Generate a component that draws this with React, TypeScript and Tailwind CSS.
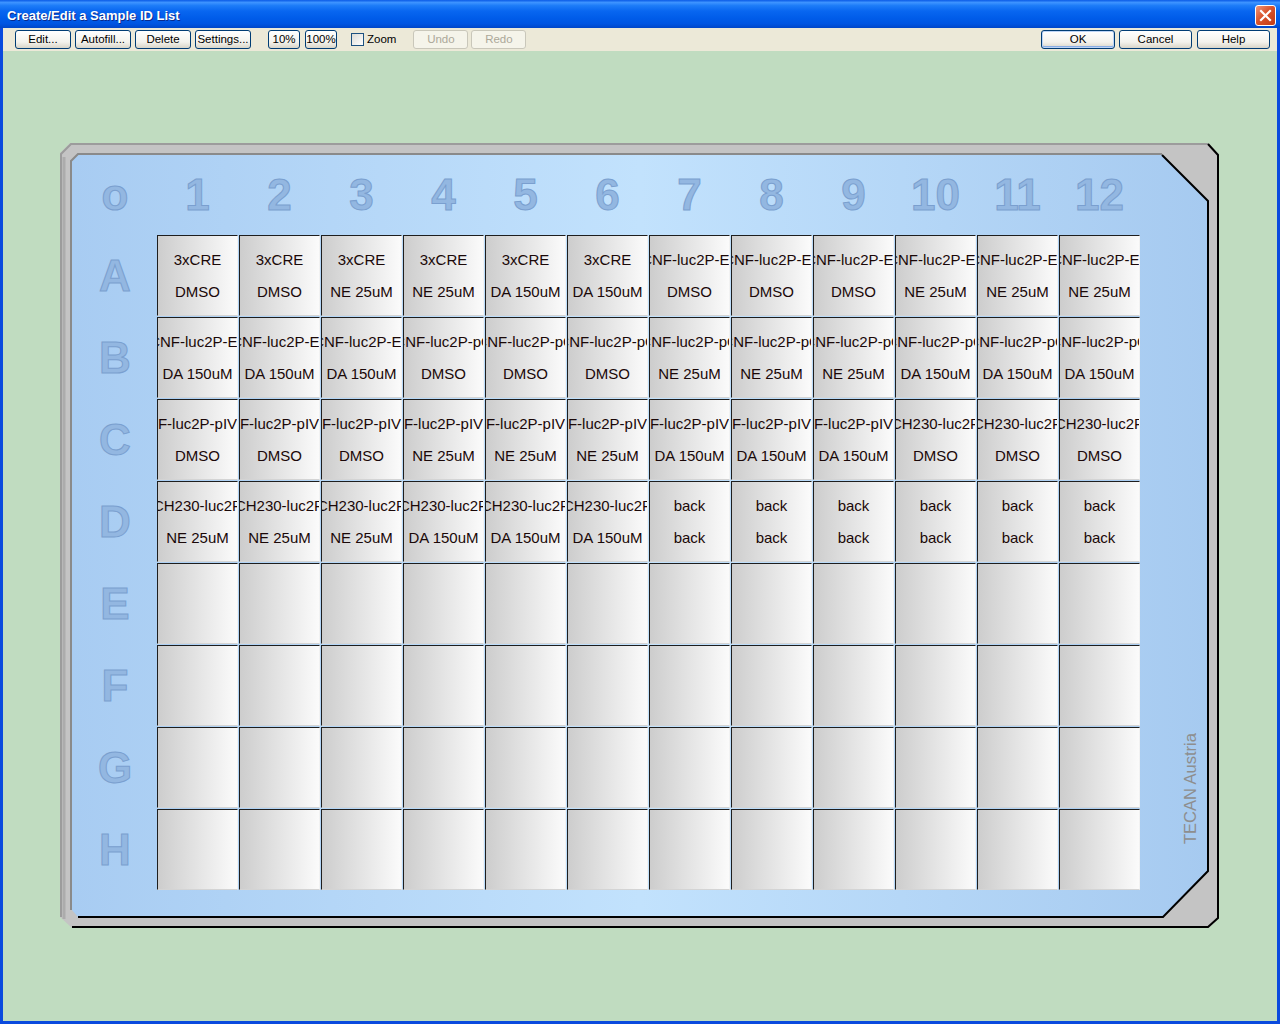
import React from 'react';

const font = "font-['Liberation_Sans',Arial,sans-serif]";

type Cell = [string, string] | null;

const E1 = 'CNF-luc2P-E1';
const PG = 'CNF-luc2P-pG';
const IV = 'NF-luc2P-pIVC';
const CH = 'CH230-luc2P';

const rep = (n: number, a: string, b: string): Cell[] => Array.from({ length: n }, () => [a, b] as Cell);
const empty = (): Cell[] => Array.from({ length: 12 }, () => null);

const plate: Cell[][] = [
  [...rep(2, '3xCRE', 'DMSO'), ...rep(2, '3xCRE', 'NE 25uM'), ...rep(2, '3xCRE', 'DA 150uM'), ...rep(3, E1, 'DMSO'), ...rep(3, E1, 'NE 25uM')],
  [...rep(3, E1, 'DA 150uM'), ...rep(3, PG, 'DMSO'), ...rep(3, PG, 'NE 25uM'), ...rep(3, PG, 'DA 150uM')],
  [...rep(3, IV, 'DMSO'), ...rep(3, IV, 'NE 25uM'), ...rep(3, IV, 'DA 150uM'), ...rep(3, CH, 'DMSO')],
  [...rep(3, CH, 'NE 25uM'), ...rep(3, CH, 'DA 150uM'), ...rep(6, 'back', 'back')],
  empty(),
  empty(),
  empty(),
  empty(),
];

const rowNames = ['A', 'B', 'C', 'D', 'E', 'F', 'G', 'H'];

function Btn({ label, w, disabled, primary }: { label: string; w: string; disabled?: boolean; primary?: boolean }) {
  return (
    <button
      className={[
        'h-[19px] rounded-[3px] border text-[11.5px] leading-none flex items-center justify-center shrink-0',
        font,
        w,
        disabled
          ? 'border-[#c9c7ba] text-[#aca899] bg-[#f5f4ea]'
          : 'border-[#003c74] text-black bg-[linear-gradient(to_bottom,#ffffff,#f3f2ec_65%,#d9d5c9)]',
        primary ? 'shadow-[inset_0_0_0_1px_#bcd4f6,inset_0_-1px_0_1px_#89ade4]' : '',
      ].join(' ')}
    >
      {label}
    </button>
  );
}

function PlateFrame() {
  return (
    <svg className="absolute inset-0" width="1160" height="786" viewBox="0 0 1160 786">
      <defs>
        <linearGradient id="blue" x1="0" x2="1" y1="0" y2="0">
          <stop offset="0" stopColor="#a8ccf2" />
          <stop offset="0.5" stopColor="#c2e2fd" />
          <stop offset="1" stopColor="#a6caf0" />
        </linearGradient>
      </defs>
      <polygon points="10,0 1148,0 1159,11 1159,775 1149,785 12,785 0,774 0,10" fill="#c4c4c4" />
      <polyline points="1,774 1,11 11,1 1148,1" fill="none" stroke="#9c9c9c" strokeWidth="2" />
      <polyline points="4,776 4,14" fill="none" stroke="#acacac" strokeWidth="3" />
      <polyline points="1148,1 1158,12 1158,775 1148,784 12,784" fill="none" stroke="#000" strokeWidth="2" />
      <polygon points="18,12 1102,12 1148,58 1148,728 1103,774 18,774 12,767 12,18" fill="url(#blue)" />
      <polyline points="11,767 11,18 18,11 1102,11" fill="none" stroke="#8a8a8a" strokeWidth="2" />
      <polyline points="1102,12 1148,58 1148,728 1103,774 18,774" fill="none" stroke="#000" strokeWidth="2" />
    </svg>
  );
}

const labelCls =
  "text-[44px] font-bold leading-none text-[#93b7e1] [-webkit-text-stroke:1px_#7a9fcf] font-['Liberation_Sans',Arial,sans-serif]";

function Well({ cell }: { cell: Cell }) {
  return (
    <div className="w-[81px] h-[81px] shrink-0 overflow-hidden border border-t-[#1e1e1e] border-l-[#1e1e1e] border-r-[#f2f2f2] border-b-[#d4d4d4] bg-[linear-gradient(to_right,#cdcdcd,#fbfbfb)] flex flex-col pt-[15px] gap-[15px] text-[15px] leading-[17px] text-[#1a0808]">
      {cell && (
        <>
          <div className="flex justify-center">
            <span className="whitespace-nowrap shrink-0">{cell[0]}</span>
          </div>
          <div className="flex justify-center">
            <span className="whitespace-nowrap shrink-0">{cell[1]}</span>
          </div>
        </>
      )}
    </div>
  );
}

export default function App() {
  return (
    <div className={`w-[1280px] h-[1024px] flex flex-col bg-[#0a4ade] overflow-hidden ${font}`}>
      {/* title bar */}
      <div className="h-[28px] shrink-0 flex items-center pt-[3px] bg-[linear-gradient(to_bottom,#0a5ae6_0%,#3d93ff_9%,#1d7cf8_20%,#0866f0_40%,#005ce9_65%,#0055e2_85%,#0046c8_100%)]">
        <span className="pl-[7px] text-white font-bold text-[13px] [text-shadow:1px_1px_0_#0a2a8c]">
          Create/Edit a Sample ID List
        </span>
        <div className="ml-auto mr-[4px] w-[21px] h-[21px] rounded-[3px] border border-white bg-[linear-gradient(135deg,#f0967a,#d9542d_45%,#c23a14)] flex items-center justify-center">
          <svg width="13" height="13" viewBox="0 0 13 13">
            <path d="M2 2 L11 11 M11 2 L2 11" stroke="#fff" strokeWidth="2.2" strokeLinecap="square" />
          </svg>
        </div>
      </div>

      <div className="flex-1 flex flex-col mx-[3px] mb-[3px]">
        {/* toolbar */}
        <div className="h-[23px] shrink-0 bg-[#ece9d8] flex items-center pl-[12px] pr-[7px]">
          <div className="flex gap-[4px]">
            <Btn label="Edit..." w="w-[56px]" />
            <Btn label="Autofill..." w="w-[56px]" />
            <Btn label="Delete" w="w-[56px]" />
            <Btn label="Settings..." w="w-[56px]" />
          </div>
          <div className="ml-[17px] flex gap-[5px]">
            <Btn label="10%" w="w-[32px]" />
            <Btn label="100%" w="w-[32px]" />
          </div>
          <div className="ml-[14px] flex items-center">
            <div className="w-[13px] h-[13px] border border-[#1c5180] bg-[linear-gradient(135deg,#dcdcd6,#ffffff)]" />
            <span className="ml-[3px] text-[11.5px] text-black">Zoom</span>
          </div>
          <div className="ml-[17px] flex gap-[3px]">
            <Btn label="Undo" w="w-[55px]" disabled />
            <Btn label="Redo" w="w-[55px]" disabled />
          </div>
          <div className="ml-auto flex">
            <Btn label="OK" w="w-[74px]" primary />
            <div className="ml-[4px]">
              <Btn label="Cancel" w="w-[73px]" />
            </div>
            <div className="ml-[5px]">
              <Btn label="Help" w="w-[73px]" />
            </div>
          </div>
        </div>

        {/* work area */}
        <div className="flex-1 bg-[#c0dcc0] pl-[57px] pt-[92px]">
          <div className="relative w-[1160px] h-[786px]">
            <PlateFrame />
            <div className="relative flex flex-col pl-[13px] pt-[12px]">
              <div className="flex h-[80px]">
                <div className={`w-[84px] flex items-center justify-center ${labelCls}`}>o</div>
                <div className="flex gap-[1px]">
                  {Array.from({ length: 12 }, (_, i) => (
                    <div key={i} className={`w-[81px] flex items-center justify-center ${labelCls}`}>
                      {i + 1}
                    </div>
                  ))}
                </div>
              </div>
              <div className="flex flex-col gap-[1px]">
                {plate.map((row, r) => (
                  <div key={r} className="flex h-[81px]">
                    <div className={`w-[84px] flex items-center justify-center ${labelCls}`}>{rowNames[r]}</div>
                    <div className="flex gap-[1px] w-[983px] overflow-hidden">
                      {row.map((cell, c) => (
                        <Well key={c} cell={cell} />
                      ))}
                    </div>
                  </div>
                ))}
              </div>
            </div>
            <div className="absolute left-[1120px] top-[584px] h-[117px] text-[16.5px] leading-[20px] text-[#8e8e8e] [writing-mode:vertical-rl] rotate-180 whitespace-nowrap">
              TECAN Austria
            </div>
          </div>
        </div>
      </div>
    </div>
  );
}
